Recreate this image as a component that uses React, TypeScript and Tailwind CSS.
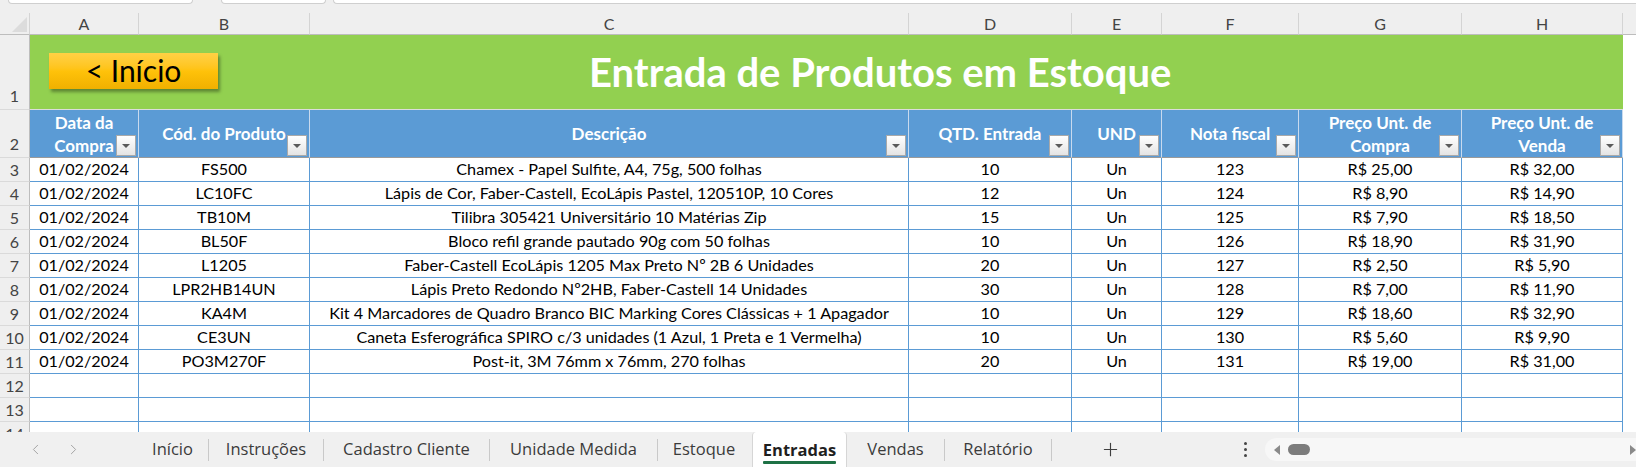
import React from "react";
import { ChevronLeft, ChevronRight, Plus } from "lucide-react";

type Row = [string, string, string, string, string, string, string, string];

const rows: Row[] = [
  ["01/02/2024", "FS500", "Chamex - Papel Sulfite, A4, 75g, 500 folhas", "10", "Un", "123", "R$ 25,00", "R$ 32,00"],
  ["01/02/2024", "LC10FC", "Lápis de Cor, Faber-Castell, EcoLápis Pastel, 120510P, 10 Cores", "12", "Un", "124", "R$ 8,90", "R$ 14,90"],
  ["01/02/2024", "TB10M", "Tilibra 305421 Universitário 10 Matérias Zip", "15", "Un", "125", "R$ 7,90", "R$ 18,50"],
  ["01/02/2024", "BL50F", "Bloco refil grande pautado 90g com 50 folhas", "10", "Un", "126", "R$ 18,90", "R$ 31,90"],
  ["01/02/2024", "L1205", "Faber-Castell EcoLápis 1205 Max Preto Nº 2B 6 Unidades", "20", "Un", "127", "R$ 2,50", "R$ 5,90"],
  ["01/02/2024", "LPR2HB14UN", "Lápis Preto Redondo Nº2HB, Faber-Castell 14 Unidades", "30", "Un", "128", "R$ 7,00", "R$ 11,90"],
  ["01/02/2024", "KA4M", "Kit 4 Marcadores de Quadro Branco BIC Marking Cores Clássicas + 1 Apagador", "10", "Un", "129", "R$ 18,60", "R$ 32,90"],
  ["01/02/2024", "CE3UN", "Caneta Esferográfica SPIRO c/3 unidades (1 Azul, 1 Preta e 1 Vermelha)", "10", "Un", "130", "R$ 5,60", "R$ 9,90"],
  ["01/02/2024", "PO3M270F", "Post-it, 3M 76mm x 76mm, 270 folhas", "20", "Un", "131", "R$ 19,00", "R$ 31,00"],
];

const emptyRows: Row[] = [
  ["", "", "", "", "", "", "", ""],
  ["", "", "", "", "", "", "", ""],
  ["", "", "", "", "", "", "", ""],
];

const letters = ["A", "B", "C", "D", "E", "F", "G", "H"];

const headers: string[][] = [
  ["Data da", "Compra"],
  ["Cód. do Produto"],
  ["Descrição"],
  ["QTD. Entrada"],
  ["UND"],
  ["Nota fiscal"],
  ["Preço Unt. de", "Compra"],
  ["Preço Unt. de", "Venda"],
];

function FilterBtn() {
  return (
    <div className="absolute right-[2px] bottom-[1px] w-[20px] h-[21px] border border-[#a9a9a9] bg-linear-to-b from-white to-[#e4e4e4] flex items-center justify-center">
      <div className="w-0 h-0 border-l-[4px] border-r-[4px] border-t-[4px] border-l-transparent border-r-transparent border-t-[#5a5a5a]" />
    </div>
  );
}

function RowHead({ n, bottom }: { n: number; bottom?: boolean }) {
  return (
    <div
      className={
        "bg-[#efefef] border-r border-b border-r-[#bdbdbd] border-b-[#dadada] flex justify-center text-[16px] text-[#444] leading-none " +
        (bottom ? "items-end pb-[5px]" : "items-center")
      }
    >
      {n}
    </div>
  );
}

function Tab({ label, w }: { label: string; w: string }) {
  return (
    <div className={"h-full flex items-center justify-center text-[16.5px] text-[#3b3b3b] " + w}>{label}</div>
  );
}

function Sep() {
  return <div className="w-px h-[22px] bg-[#c9c9c9] shrink-0" />;
}

export default function App() {
  return (
    <div
      className="w-[1636px] h-[467px] overflow-hidden bg-white flex flex-col"
      style={{ fontFamily: "Lato, 'Open Sans', sans-serif" }}
    >
      {/* top strip */}
      <div className="h-[13px] bg-[#efefef] flex items-start shrink-0">
        <div className="ml-[8px] w-[185px] h-[4px] bg-white border-x border-b border-[#cfcfcf] rounded-b-[5px]" />
        <div className="ml-[28px] w-[105px] h-[4px] bg-white border-x border-b border-[#cfcfcf] rounded-b-[5px]" />
        <div className="ml-[7px] flex-1 h-[4px] bg-white border-l border-b border-[#cfcfcf] rounded-bl-[5px]" />
      </div>

      {/* sheet grid */}
      <div className="h-[419px] overflow-hidden shrink-0">
        <div className="grid grid-cols-[30px_109px_171px_599px_163px_90px_137px_163px_161px_1fr] grid-rows-[22px_75px_48px_repeat(12,24px)]">
          {/* column header row */}
          <div className="relative bg-[#efefef] border-r border-b border-r-[#d4d4d4] border-b-[#bdbdbd]">
            <svg className="absolute left-0 top-0" width="30" height="22" viewBox="0 0 30 22">
              <polygon points="27,4 27,19 12,19" fill="#dcdcdc" />
            </svg>
          </div>
          {letters.map((l) => (
            <div
              key={l}
              className="bg-[#efefef] border-r border-b border-r-[#d4d4d4] border-b-[#bdbdbd] flex items-center justify-center text-[16px] text-[#444] leading-none"
            >
              {l}
            </div>
          ))}
          <div className="bg-[#efefef] border-b border-b-[#bdbdbd]" />

          {/* row 1 */}
          <RowHead n={1} bottom />
          <div className="col-span-8 bg-[#92d050] border-b border-b-[#dcdcdc] flex items-center pb-[2px]">
            <div className="ml-[19px] w-[169px] h-[36px] bg-linear-to-b from-[#ffd144] via-[#ffc20a] to-[#f0b000] shadow-[2px_3px_3px_rgba(0,0,0,0.35)] flex items-center justify-center text-[30px] text-black leading-none pb-[2px]">
              &lt; Início
            </div>
            <div className="ml-[371px] text-[40px] font-bold text-white leading-none pt-[2px]">
              Entrada de Produtos em Estoque
            </div>
          </div>
          <div className="bg-white" />

          {/* row 2 headers */}
          <RowHead n={2} bottom />
          {headers.map((h, i) => (
            <div
              key={i}
              className="relative bg-[#5b9bd5] border-r border-b border-r-[#c9daee] border-b-[#9a9a9a] flex flex-col items-center justify-center text-white font-bold text-[17px] leading-[23px]"
            >
              {h.map((t, j) => (
                <span key={j}>{t}</span>
              ))}
              <FilterBtn />
            </div>
          ))}
          <div className="bg-white" />

          {/* data rows */}
          {[...rows, ...emptyRows].map((r, ri) => (
            <React.Fragment key={ri}>
              <RowHead n={ri + 3} />
              {r.map((c, ci) => (
                <div
                  key={ci}
                  className="bg-white border-r border-b border-[#5b9bd5] flex items-center justify-center text-[16.2px] text-black leading-none whitespace-nowrap"
                >
                  {c}
                </div>
              ))}
              <div className="bg-white" />
            </React.Fragment>
          ))}
        </div>
      </div>

      {/* tab bar */}
      <div
        className="h-[35px] bg-[#f0f0f0] flex items-center shrink-0"
        style={{ fontFamily: "'Open Sans', sans-serif" }}
      >
        <div className="w-[137px] h-full flex items-center pl-[27px] shrink-0">
          <ChevronLeft size={17} strokeWidth={1.4} color="#a3a3a3" />
          <div className="w-[21px]" />
          <ChevronRight size={17} strokeWidth={1.4} color="#a3a3a3" />
        </div>
        <Tab label="Início" w="w-[71px]" />
        <Sep />
        <Tab label="Instruções" w="w-[114px]" />
        <Sep />
        <Tab label="Cadastro Cliente" w="w-[165px]" />
        <Sep />
        <Tab label="Unidade Medida" w="w-[167px]" />
        <Sep />
        <div className="w-[94px] h-full flex items-center justify-center text-[16.5px] text-[#3b3b3b] pr-[2px]">Estoque</div>
        <div className="w-[95px] h-full bg-white border-x border-[#d6d6d6] rounded-t-[4px] flex items-center justify-center pt-[4px]">
          <div className="flex flex-col items-stretch">
            <span className="text-[16.5px] font-bold text-[#1f1f1f] leading-[20px]">Entradas</span>
            <span className="h-[3px] bg-[#1e7145] mt-[1px] rounded-[1px]" />
          </div>
        </div>
        <Tab label="Vendas" w="w-[97px]" />
        <Sep />
        <Tab label="Relatório" w="w-[106px]" />
        <Sep />
        <div className="w-[116px] h-full flex items-center justify-center">
          <Plus size={21} strokeWidth={1.3} color="#3f3f3f" />
        </div>
        <div className="w-[59px]" />
        <div className="w-[36px] h-full flex flex-col items-center justify-center gap-[3px]">
          <span className="w-[3px] h-[3px] rounded-full bg-[#444]" />
          <span className="w-[3px] h-[3px] rounded-full bg-[#444]" />
          <span className="w-[3px] h-[3px] rounded-full bg-[#444]" />
        </div>
        <div className="flex-1 h-[23px] ml-[2px] bg-[#f7f7f7] rounded-l-full flex items-center pl-[8px]">
          <svg width="8" height="10" viewBox="0 0 8 10">
            <polygon points="7,0 7,10 1,5" fill="#8a8a8a" />
          </svg>
          <div className="ml-[7px] w-[22px] h-[11px] rounded-full bg-[#7c7c7c]" />
          <div className="flex-1" />
          <svg width="6" height="10" viewBox="0 0 6 10">
            <polygon points="0,0 0,10 6,5" fill="#8a8a8a" />
          </svg>
        </div>
      </div>
    </div>
  );
}
